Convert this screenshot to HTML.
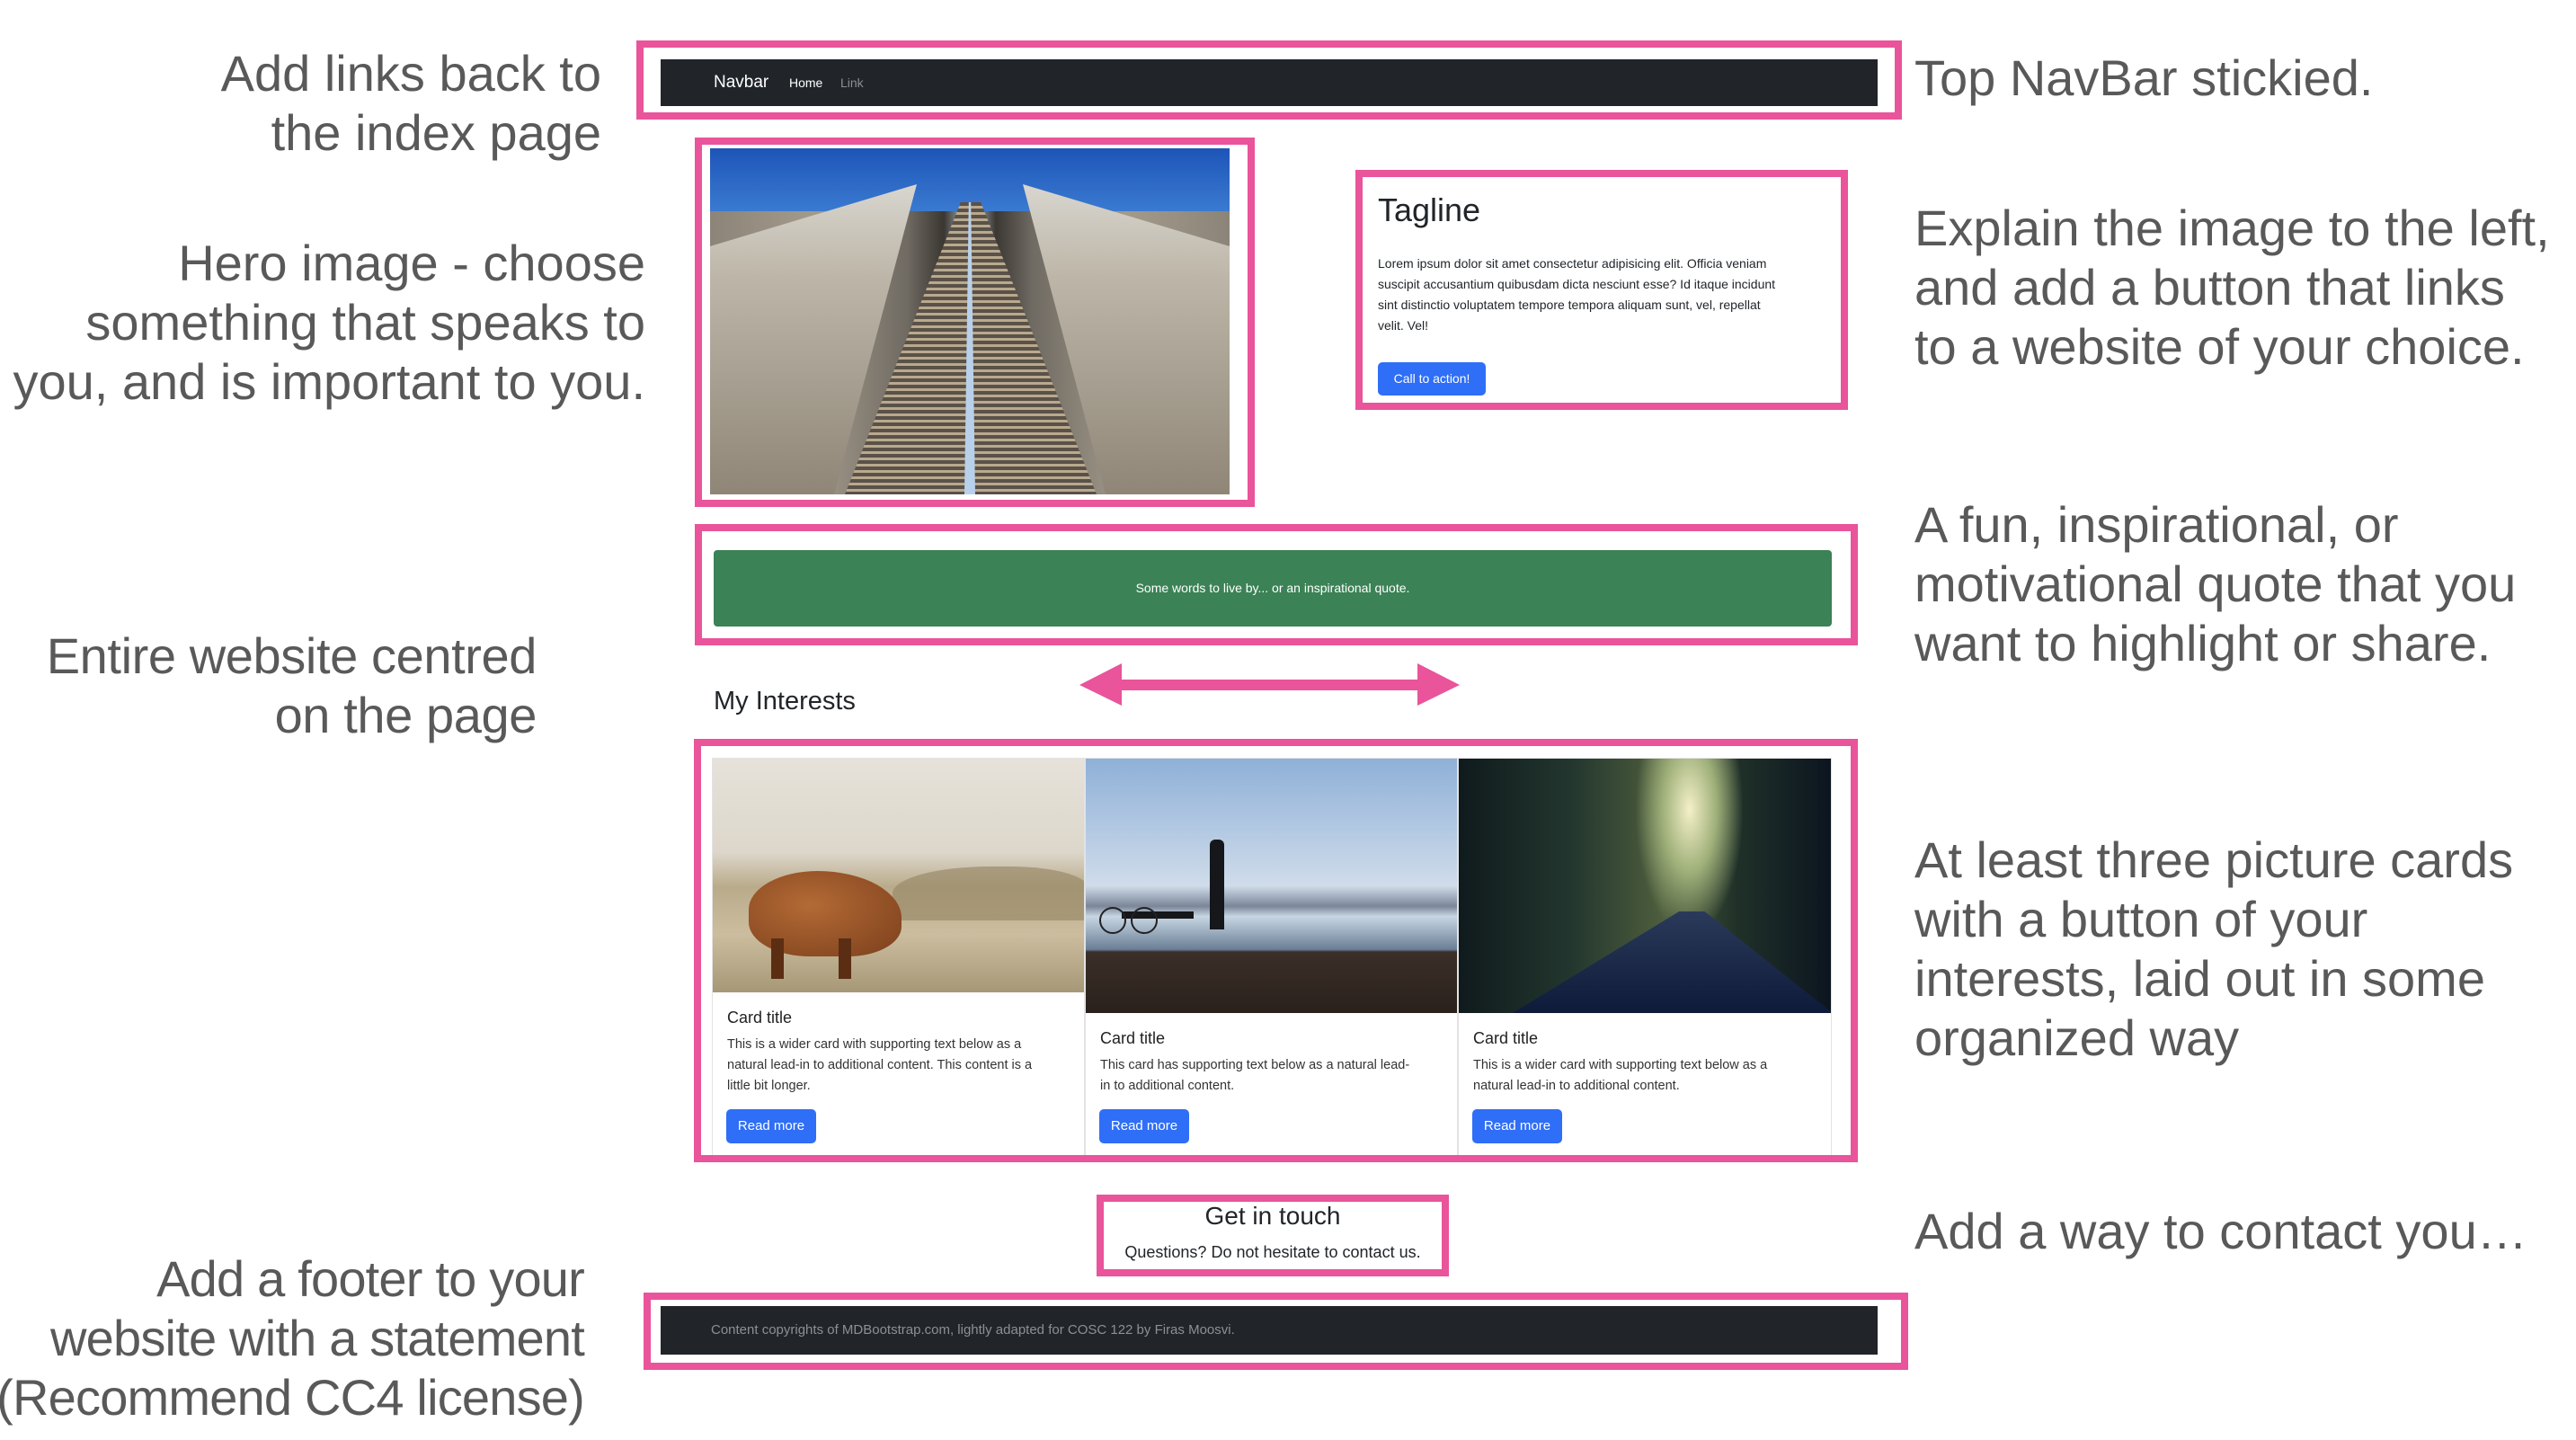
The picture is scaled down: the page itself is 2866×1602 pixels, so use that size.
<!DOCTYPE html>
<html><head><meta charset="utf-8">
<style>
*{margin:0;padding:0;box-sizing:border-box}
body{width:2866px;height:1602px;background:#fff;position:relative;overflow:hidden;font-family:"Liberation Sans",Arial,sans-serif}
.ann{position:absolute;font-size:56px;line-height:66px;color:#595959;white-space:nowrap}
.r{text-align:right}
.pk{position:absolute;border:8px solid #e9549b}
.abs{position:absolute}
.card{position:absolute;top:843px;width:415px;height:460px;border:1px solid #e3e3e3;background:#fff;overflow:hidden}
.card .img{width:100%}
.card .t{position:absolute;left:16px;font-size:18px;color:#222;font-weight:500}
.card .p{position:absolute;left:16px;font-size:14.5px;line-height:23px;color:#333;white-space:nowrap}
.btn{position:absolute;background:#2f6ef6;color:#fff;border-radius:5px;font-size:15px;text-align:center}
</style></head><body>

<!-- left annotations -->
<div class="ann r" style="right:2197px;top:49px">Add links back to<br>the index page</div>
<div class="ann r" style="right:2148px;top:260px">Hero image - choose<br>something that speaks to<br>you, and is important to you.</div>
<div class="ann r" style="right:2269px;top:697px;letter-spacing:-0.4px">Entire website centred<br>on the page</div>
<div class="ann r" style="right:2216px;top:1390px;letter-spacing:-0.8px">Add a footer to your<br>website with a statement<br>(Recommend CC4 license)</div>

<!-- right annotations -->
<div class="ann" style="left:2130px;top:54px">Top NavBar stickied.</div>
<div class="ann" style="left:2130px;top:221px">Explain the image to the left,<br>and add a button that links<br>to a website of your choice.</div>
<div class="ann" style="left:2130px;top:551px">A fun, inspirational, or<br>motivational quote that you<br>want to highlight or share.</div>
<div class="ann" style="left:2130px;top:924px">At least three picture cards<br>with a button of your<br>interests, laid out in some<br>organized way</div>
<div class="ann" style="left:2130px;top:1337px">Add a way to contact you…</div>

<!-- navbar -->
<div class="pk" style="left:708px;top:45px;width:1408px;height:88px"></div>
<div class="abs" style="left:735px;top:66px;width:1354px;height:52px;background:#212529">
  <span class="abs" style="left:59px;top:15px;font-size:19px;color:#fff">Navbar</span>
  <span class="abs" style="left:143px;top:18px;font-size:14px;color:#fff">Home</span>
  <span class="abs" style="left:200px;top:18px;font-size:14px;color:#8c8f93">Link</span>
</div>

<!-- hero -->
<div class="pk" style="left:773px;top:153px;width:623px;height:411px"></div>
<div class="abs" style="left:790px;top:165px;width:578px;height:385px;overflow:hidden;background:linear-gradient(90deg,#8c8478 0%,#a39a8b 20%,#6f6a62 38%,#3a3631 45%,#b9c6d6 50%,#3b3732 55%,#6f6a62 62%,#a39a8b 80%,#8c8478 100%)">
  <div class="abs" style="left:0;top:0;width:578px;height:70px;background:linear-gradient(180deg,#1d55b8,#3a7ad0)"></div>
  <div class="abs" style="left:0;top:40px;width:230px;height:345px;background:linear-gradient(180deg,#d8d6cf 0%,#bdb6a8 30%,#8f8677 100%);clip-path:polygon(0 20%,100% 0,60% 100%,0 100%)"></div>
  <div class="abs" style="left:348px;top:40px;width:230px;height:345px;background:linear-gradient(180deg,#d8d6cf 0%,#bdb6a8 30%,#8f8677 100%);clip-path:polygon(0 0,100% 20%,100% 100%,40% 100%)"></div>
  <div class="abs" style="left:150px;top:60px;width:280px;height:325px;background:repeating-linear-gradient(180deg,#5a5148 0 4px,#b9a98e 4px 7px);clip-path:polygon(46% 0,54% 0,100% 100%,0 100%)"></div>
  <div class="abs" style="left:283px;top:60px;width:12px;height:325px;background:#b9d0ea;clip-path:polygon(40% 0,60% 0,100% 100%,0 100%)"></div>
</div>

<!-- tagline -->
<div class="pk" style="left:1508px;top:189px;width:548px;height:267px"></div>
<div class="abs" style="left:1533px;top:213px;font-size:36px;color:#212529;font-weight:500">Tagline</div>
<div class="abs" style="left:1533px;top:282px;font-size:14px;line-height:23px;color:#212529;white-space:nowrap">Lorem ipsum dolor sit amet consectetur adipisicing elit. Officia veniam<br>suscipit accusantium quibusdam dicta nesciunt esse? Id itaque incidunt<br>sint distinctio voluptatem tempore tempora aliquam sunt, vel, repellat<br>velit. Vel!</div>
<div class="btn" style="left:1533px;top:403px;width:120px;height:37px;line-height:37px;font-size:14px">Call to action!</div>

<!-- quote -->
<div class="pk" style="left:773px;top:583px;width:1294px;height:135px"></div>
<div class="abs" style="left:794px;top:612px;width:1244px;height:85px;background:#3b8256;border-radius:4px;color:#fff;font-size:14px;line-height:85px;text-align:center">Some words to live by... or an inspirational quote.</div>

<!-- my interests + arrow -->
<div class="abs" style="left:794px;top:764px;font-size:29px;color:#212529;font-weight:500">My Interests</div>
<svg class="abs" style="left:1190px;top:730px" width="450" height="70" viewBox="1190 730 450 70">
  <polygon fill="#e9549b" points="1201,762 1248,738 1248,756 1577,756 1577,738 1624,762 1577,785 1577,768 1248,768 1248,785"/>
</svg>

<!-- cards -->
<div class="pk" style="left:772px;top:822px;width:1295px;height:471px"></div>
<div class="card" style="left:792px;height:445px">
  <div class="img" style="height:260px;background:linear-gradient(180deg,#e6e2da 0%,#ddd7cb 40%,#b9ab8a 55%,#cbbd9e 75%,#a69877 100%);position:relative">
    <div class="abs" style="left:200px;top:120px;width:218px;height:60px;background:#9a8a6a;border-radius:50% 40% 0 0;opacity:.7"></div>
    <div class="abs" style="left:40px;top:125px;width:170px;height:95px;background:radial-gradient(ellipse at 40% 40%,#b36a35,#7c3f1c);border-radius:45% 55% 35% 40%"></div>
    <div class="abs" style="left:65px;top:200px;width:14px;height:45px;background:#5b2e14"></div>
    <div class="abs" style="left:140px;top:200px;width:14px;height:45px;background:#5b2e14"></div>
  </div>
  <div class="t" style="top:278px">Card title</div>
  <div class="p" style="top:307px">This is a wider card with supporting text below as a<br>natural lead-in to additional content. This content is a<br>little bit longer.</div>
  <div class="btn" style="left:15px;top:390px;width:100px;height:38px;line-height:38px">Read more</div>
</div>
<div class="card" style="left:1207px;height:445px">
  <div class="img" style="height:283px;background:linear-gradient(180deg,#8fb0d8 0%,#cfdcea 50%,#7b8798 58%,#c7d6e3 62%,#6a7f96 75%,#3b2f28 76%,#2a211c 100%);position:relative">
    <div class="abs" style="left:138px;top:90px;width:16px;height:100px;background:#15171b;border-radius:6px 6px 0 0"></div>
    <div class="abs" style="left:40px;top:170px;width:80px;height:8px;background:#15171b"></div>
    <div class="abs" style="left:15px;top:165px;width:30px;height:30px;border:2px solid #222;border-radius:50%"></div>
    <div class="abs" style="left:50px;top:165px;width:30px;height:30px;border:2px solid #222;border-radius:50%"></div>
  </div>
  <div class="t" style="top:301px">Card title</div>
  <div class="p" style="top:330px">This card has supporting text below as a natural lead-<br>in to additional content.</div>
  <div class="btn" style="left:15px;top:390px;width:100px;height:38px;line-height:38px">Read more</div>
</div>
<div class="card" style="left:1622px;width:416px;height:445px">
  <div class="img" style="height:283px;background:radial-gradient(ellipse 60px 140px at 62% 20%,#f4f0c8 0%,#9fb07a 50%,rgba(0,0,0,0) 100%),linear-gradient(90deg,#0f1a1c 0%,#23362e 30%,#4e5e3d 55%,#1f3028 75%,#0c1520 100%);position:relative">
    <div class="abs" style="left:60px;top:170px;width:356px;height:113px;background:linear-gradient(180deg,#2b3a5a,#0e1a3a);clip-path:polygon(52% 0,60% 0,100% 100%,0 100%)"></div>
  </div>
  <div class="t" style="top:301px">Card title</div>
  <div class="p" style="top:330px">This is a wider card with supporting text below as a<br>natural lead-in to additional content.</div>
  <div class="btn" style="left:15px;top:390px;width:100px;height:38px;line-height:38px">Read more</div>
</div>
<div class="abs" style="left:772px;top:1285px;width:1295px;height:8px;background:#e9549b"></div>

<!-- contact -->
<div class="pk" style="left:1220px;top:1329px;width:392px;height:91px"></div>
<div class="abs" style="left:1220px;top:1337px;width:392px;text-align:center;font-size:28px;color:#212529;font-weight:500">Get in touch</div>
<div class="abs" style="left:1220px;top:1383px;width:392px;text-align:center;font-size:18px;color:#212529">Questions? Do not hesitate to contact us.</div>

<!-- footer -->
<div class="pk" style="left:716px;top:1438px;width:1407px;height:86px"></div>
<div class="abs" style="left:735px;top:1453px;width:1354px;height:54px;background:#212529">
  <span class="abs" style="left:56px;top:18px;font-size:15px;color:#8c8f93">Content copyrights of MDBootstrap.com, lightly adapted for COSC 122 by Firas Moosvi.</span>
</div>
</body></html>
